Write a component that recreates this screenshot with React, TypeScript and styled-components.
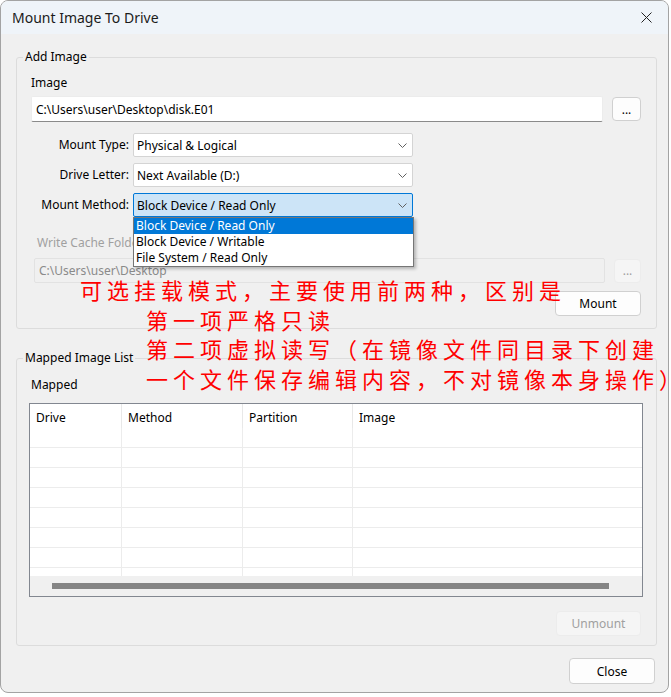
import React from 'react';
import styled, { createGlobalStyle } from 'styled-components';

const GlobalStyle = createGlobalStyle`
  html, body {
    margin: 0;
    padding: 0;
    background: #ffffff;
  }
  body {
    font-family: "Noto Sans", "Noto Sans CJK SC", sans-serif;
    font-size: 12px;
    color: #000000;
  }
  * {
    box-sizing: border-box;
  }
`;

const Window = styled.div`
  position: relative;
  width: 669px;
  height: 693px;
  border: 1px solid #a3a3a3;
  border-radius: 8px;
  overflow: hidden;
  background: #f0f0f0;
  display: flex;
  flex-direction: column;
`;

const TitleBar = styled.div`
  flex: none;
  height: 33px;
  background: #eff4f9;
  display: flex;
  align-items: center;
  justify-content: space-between;
  padding: 0 16px 0 11px;
`;

const TitleText = styled.span`
  font-size: 14px;
  color: #1b1b1b;
`;

const Body = styled.div`
  flex: 1;
  display: flex;
  flex-direction: column;
  padding: 15px 11px 0 15px;
`;

const Group = styled.fieldset<{ $top?: number }>`
  margin: ${p => p.$top ?? 0}px 0 0 0;
  padding: 0;
  min-width: 0;
  border: 1px solid #dcdcdc;
  border-radius: 3px;
`;

const GroupTitle = styled.legend`
  margin-left: 6px;
  padding: 0 2px;
  line-height: 16px;
  font-size: 12px;
`;

const GroupContent = styled.div<{ $pad: string }>`
  display: flex;
  flex-direction: column;
  padding: ${p => p.$pad};
`;

const Label = styled.div<{ $disabled?: boolean; $indent?: number; $top?: number }>`
  line-height: 16px;
  margin-top: ${p => p.$top ?? 0}px;
  padding-left: ${p => p.$indent ?? 0}px;
  color: ${p => (p.$disabled ? '#a0a0a0' : '#000000')};
`;

const InputRow = styled.div<{ $top: number; $indent?: number }>`
  display: flex;
  align-items: center;
  gap: 9px;
  margin-top: ${p => p.$top}px;
  padding-left: ${p => p.$indent ?? 0}px;
`;

const TextInput = styled.div<{ $disabled?: boolean }>`
  flex: 1;
  height: ${p => (p.$disabled ? 25 : 26)}px;
  display: flex;
  align-items: center;
  padding-left: 4px;
  background: ${p => (p.$disabled ? '#f0f0f0' : '#ffffff')};
  border: 1px solid ${p => (p.$disabled ? '#e2e2e2' : '#ececec')};
  border-bottom-color: ${p => (p.$disabled ? '#e2e2e2' : '#8a8a8a')};
  border-radius: 2px;
  color: ${p => (p.$disabled ? '#8a8a8a' : '#000000')};
  white-space: nowrap;
`;

const Button = styled.div<{ $w: number; $h: number; $disabled?: boolean }>`
  flex: none;
  width: ${p => p.$w}px;
  height: ${p => p.$h}px;
  display: flex;
  align-items: center;
  justify-content: center;
  background: ${p => (p.$disabled ? '#f5f5f5' : '#fdfdfd')};
  border: 1px solid ${p => (p.$disabled ? '#ececec' : '#d0d0d0')};
  border-radius: 4px;
  color: ${p => (p.$disabled ? '#a0a0a0' : '#000000')};
`;

const ButtonRow = styled.div<{ $top: number; $right?: number }>`
  display: flex;
  justify-content: flex-end;
  margin-top: ${p => p.$top}px;
  padding-right: ${p => p.$right ?? 0}px;
`;

const FormGrid = styled.div`
  display: grid;
  grid-template-columns: 98px 280px;
  column-gap: 4px;
  row-gap: 6px;
  margin-top: 11px;
  align-items: center;
`;

const FormLabel = styled.div`
  text-align: right;
  line-height: 16px;
`;

const ComboWrap = styled.div`
  position: relative;
`;

const Combo = styled.div<{ $active?: boolean }>`
  height: 24px;
  display: flex;
  align-items: center;
  justify-content: space-between;
  padding: 0 5px 0 3px;
  background: ${p => (p.$active ? '#cce4f7' : '#ffffff')};
  border: 1px solid ${p => (p.$active ? '#0078d7' : '#d4d4d4')};
  border-radius: 2px;
`;

const DropList = styled.div`
  position: absolute;
  top: 100%;
  left: 0;
  width: 281px;
  background: #ffffff;
  border: 1px solid #767676;
  box-shadow: 2px 2px 3px rgba(0, 0, 0, 0.25);
  z-index: 2;
`;

const DropItem = styled.div<{ $selected?: boolean }>`
  height: 16px;
  line-height: 16px;
  padding-left: 2px;
  background: ${p => (p.$selected ? '#0078d7' : 'transparent')};
  color: ${p => (p.$selected ? '#ffffff' : '#000000')};
`;

const Table = styled.div`
  margin-top: 10px;
  height: 194px;
  display: flex;
  flex-direction: column;
  background: #ffffff;
  border: 1px solid #828790;
`;

const HeaderRow = styled.div`
  flex: none;
  display: flex;
  height: 24px;
`;

const HeaderCell = styled.div<{ $w?: number }>`
  ${p => (p.$w ? `width: ${p.$w}px; flex: none;` : 'flex: 1;')}
  padding-left: 6px;
  line-height: 27px;
  border-right: 1px solid #e8e8e8;
  &:last-child {
    border-right: none;
  }
`;

const Rows = styled.div`
  flex: 1;
  overflow: hidden;
`;

const Row = styled.div`
  display: flex;
  height: 20px;
  border-bottom: 1px solid #ececec;
`;

const Cell = styled.div<{ $w?: number }>`
  ${p => (p.$w ? `width: ${p.$w}px; flex: none;` : 'flex: 1;')}
  border-right: 1px solid #ececec;
  &:last-child {
    border-right: none;
  }
`;

const HScroll = styled.div`
  flex: none;
  height: 20px;
  background: #f0f0f0;
  padding: 7px 33px 7px 22px;
`;

const Thumb = styled.div`
  height: 6px;
  background: #858585;
`;

const Footer = styled.div`
  display: flex;
  justify-content: flex-end;
  margin-top: 12px;
  padding-right: 2px;
`;

const Note = styled.div`
  position: absolute;
  left: 79px;
  top: 274px;
  color: #ff0000;
  font-family: "Noto Sans CJK SC", sans-serif;
  font-size: 22px;
  letter-spacing: 5px;
  line-height: 29.5px;
  white-space: nowrap;
  pointer-events: none;
`;

const NoteLine = styled.div<{ $indent?: number }>`
  padding-left: ${p => p.$indent ?? 0}px;
`;

const Chevron = () => (
  <svg width="9" height="5" viewBox="0 0 9 5">
    <polyline points="0.5,0.5 4.5,4.5 8.5,0.5" fill="none" stroke="#606060" strokeWidth="1" />
  </svg>
);

const CloseIcon = () => (
  <svg width="11" height="11" viewBox="0 0 11 11">
    <path d="M0.5 0.5 L10.5 10.5 M10.5 0.5 L0.5 10.5" stroke="#222" strokeWidth="1" />
  </svg>
);

const columns = [92, 121, 110, 0];

const App = () => {
  return (
    <>
      <GlobalStyle />
      <Window>
        <TitleBar>
          <TitleText>Mount Image To Drive</TitleText>
          <CloseIcon />
        </TitleBar>
        <Body>
          <Group>
            <GroupTitle>Add Image</GroupTitle>
            <GroupContent $pad="10px 15px 12px 14px">
              <Label>Image</Label>
              <InputRow $top={5}>
                <TextInput>C:\Users\user\Desktop\disk.E01</TextInput>
                <Button $w={29} $h={24}>...</Button>
              </InputRow>
              <FormGrid>
                <FormLabel>Mount Type:</FormLabel>
                <ComboWrap>
                  <Combo>
                    <span>Physical &amp; Logical</span>
                    <Chevron />
                  </Combo>
                </ComboWrap>
                <FormLabel>Drive Letter:</FormLabel>
                <ComboWrap>
                  <Combo>
                    <span>Next Available (D:)</span>
                    <Chevron />
                  </Combo>
                </ComboWrap>
                <FormLabel>Mount Method:</FormLabel>
                <ComboWrap>
                  <Combo $active>
                    <span>Block Device / Read Only</span>
                    <Chevron />
                  </Combo>
                  <DropList>
                    <DropItem $selected>Block Device / Read Only</DropItem>
                    <DropItem>Block Device / Writable</DropItem>
                    <DropItem>File System / Read Only</DropItem>
                  </DropList>
                </ComboWrap>
              </FormGrid>
              <Label $disabled $indent={6} $top={18}>
                Write Cache Folder
              </Label>
              <InputRow $top={7} $indent={3}>
                <TextInput $disabled>C:\Users\user\Desktop</TextInput>
                <Button $w={27} $h={24} $disabled>...</Button>
              </InputRow>
              <ButtonRow $top={8}>
                <Button $w={86} $h={25}>Mount</Button>
              </ButtonRow>
            </GroupContent>
          </Group>
          <Group $top={21}>
            <GroupTitle>Mapped Image List</GroupTitle>
            <GroupContent $pad="11px 13px 9px 12px">
              <Label $indent={2}>Mapped</Label>
              <Table>
                <HeaderRow>
                  <HeaderCell $w={92}>Drive</HeaderCell>
                  <HeaderCell $w={121}>Method</HeaderCell>
                  <HeaderCell $w={110}>Partition</HeaderCell>
                  <HeaderCell>Image</HeaderCell>
                </HeaderRow>
                <Rows>
                  {Array.from({ length: 8 }).map((_, i) => (
                    <Row key={i}>
                      {columns.map((w, j) => (
                        <Cell key={j} $w={w || undefined} />
                      ))}
                    </Row>
                  ))}
                </Rows>
                <HScroll>
                  <Thumb />
                </HScroll>
              </Table>
              <ButtonRow $top={14} $right={2}>
                <Button $w={85} $h={25} $disabled>Unmount</Button>
              </ButtonRow>
            </GroupContent>
          </Group>
          <Footer>
            <Button $w={86} $h={26}>Close</Button>
          </Footer>
        </Body>
        <Note>
          <NoteLine>可选挂载模式，主要使用前两种，区别是</NoteLine>
          <NoteLine $indent={66}>第一项严格只读</NoteLine>
          <NoteLine $indent={66}>第二项虚拟读写（在镜像文件同目录下创建</NoteLine>
          <NoteLine $indent={66}>一个文件保存编辑内容，不对镜像本身操作）</NoteLine>
        </Note>
      </Window>
    </>
  );
};

export default App;
